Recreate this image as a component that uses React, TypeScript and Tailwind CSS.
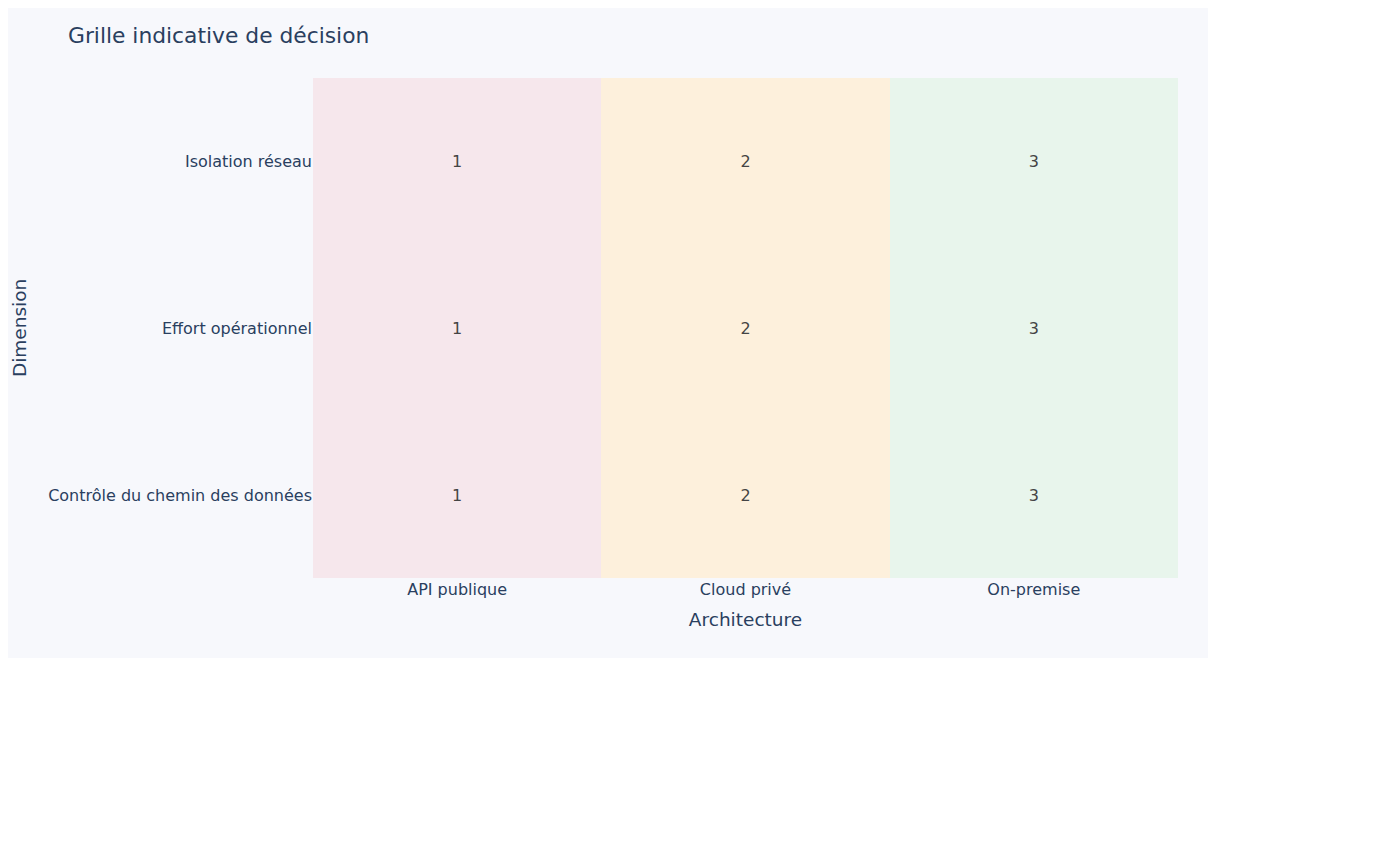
const rows = ["Isolation réseau", "Effort opérationnel", "Contrôle du chemin des données"];

const cols = [
  { name: "API publique", value: 1, bg: "bg-[#f6e7ec]" },
  { name: "Cloud privé", value: 2, bg: "bg-[#fdf0dc]" },
  { name: "On-premise", value: 3, bg: "bg-[#e8f5ec]" },
];

export default function App() {
  return (
    <div className="min-h-[850px] w-[1400px] bg-white p-2 font-['DejaVu_Sans',Verdana,sans-serif] text-[#2a3f5f]">
      <div className="flex h-[650px] w-[1200px] flex-col bg-[#f7f8fc]">
        {/* title */}
        <div className="h-[70px] pl-[60px] pt-[17px] text-[21.8px] leading-[22px]">
          Grille indicative de décision
        </div>

        {/* y axis + grid */}
        <div className="flex h-[500px]">
          <div className="flex w-[24px] items-center justify-center">
            <span className="-rotate-90 whitespace-nowrap text-[18.5px]">Dimension</span>
          </div>
          <div className="flex w-[281px] flex-col">
            {rows.map((r) => (
              <div key={r} className="flex flex-1 items-center justify-end pr-px pt-[2px] text-[16px] whitespace-nowrap">
                {r}
              </div>
            ))}
          </div>
          <div className="grid w-[865px] grid-cols-3">
            {cols.map((c) => (
              <div key={c.name} className={`flex flex-col ${c.bg}`}>
                {rows.map((r) => (
                  <div key={r} className="flex flex-1 items-center justify-center pt-[2px] text-[16px] text-[#444]">
                    {c.value}
                  </div>
                ))}
              </div>
            ))}
          </div>
        </div>

        {/* x axis */}
        <div className="flex">
          <div className="w-[305px]" />
          <div className="w-[865px]">
            <div className="grid h-[24px] grid-cols-3 text-[16px] leading-[24px]">
              {cols.map((c) => (
                <div key={c.name} className="text-center">
                  {c.name}
                </div>
              ))}
            </div>
            <div className="mt-[7px] text-center text-[18.5px] leading-[22px]">Architecture</div>
          </div>
        </div>
      </div>
    </div>
  );
}
